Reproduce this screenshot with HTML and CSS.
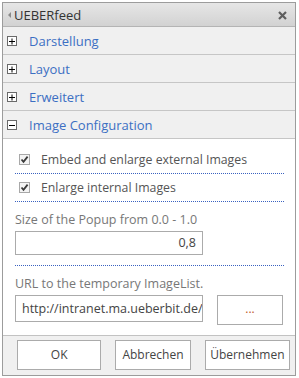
FILE: index.html
```html
<!DOCTYPE html>
<html lang="de">
<head>
    <meta charset="UTF-8">
    <title>UEBERfeed</title>
    <link rel="stylesheet" href="styles.css">
</head>
<body>
    <div class="dialog">
        <div class="titlebar">
            <span class="arrow"></span>
            <span class="title">UEBERfeed</span>
            <svg class="close" width="9" height="9" viewBox="0 0 9 9">
                <path d="M1 1L8 8M8 1L1 8" stroke="#5e5e5e" stroke-width="2.2"/>
            </svg>
        </div>

        <div class="section">
            <svg class="toggle" width="10" height="10" viewBox="0 0 10 10">
                <rect x="0.5" y="0.5" width="9" height="9" fill="#fff" stroke="#6a6a6a"/>
                <path d="M2 5.5H8M5 2.5V8.5" stroke="#000" stroke-width="1"/>
            </svg>
            <span class="section-name">Darstellung</span>
        </div>
        <div class="section">
            <svg class="toggle" width="10" height="10" viewBox="0 0 10 10">
                <rect x="0.5" y="0.5" width="9" height="9" fill="#fff" stroke="#6a6a6a"/>
                <path d="M2 5.5H8M5 2.5V8.5" stroke="#000" stroke-width="1"/>
            </svg>
            <span class="section-name">Layout</span>
        </div>
        <div class="section">
            <svg class="toggle" width="10" height="10" viewBox="0 0 10 10">
                <rect x="0.5" y="0.5" width="9" height="9" fill="#fff" stroke="#6a6a6a"/>
                <path d="M2 5.5H8M5 2.5V8.5" stroke="#000" stroke-width="1"/>
            </svg>
            <span class="section-name">Erweitert</span>
        </div>
        <div class="section">
            <svg class="toggle" width="10" height="10" viewBox="0 0 10 10">
                <rect x="0.5" y="0.5" width="9" height="9" fill="#fff" stroke="#6a6a6a"/>
                <path d="M2 5.5H8" stroke="#000" stroke-width="1"/>
            </svg>
            <span class="section-name">Image Configuration</span>
        </div>

        <div class="content">
            <div class="option">
                <span class="check">
                    <svg width="11" height="11" viewBox="0 0 11 11">
                        <rect x="0.5" y="0.5" width="10" height="10" fill="#f4f4f4" stroke="#a8a8a8"/>
                        <path d="M2.5 5.5L4.5 7.8L8.6 2.6" fill="none" stroke="#3a3a3a" stroke-width="1.8"/>
                    </svg>
                </span>
                <span>Embed and enlarge external Images</span>
            </div>
            <div class="option">
                <span class="check">
                    <svg width="11" height="11" viewBox="0 0 11 11">
                        <rect x="0.5" y="0.5" width="10" height="10" fill="#f4f4f4" stroke="#a8a8a8"/>
                        <path d="M2.5 5.5L4.5 7.8L8.6 2.6" fill="none" stroke="#3a3a3a" stroke-width="1.8"/>
                    </svg>
                </span>
                <span>Enlarge internal Images</span>
            </div>

            <div class="field">
                <div class="label">Size of the Popup from 0.0 - 1.0</div>
                <div class="input number">0,8</div>
            </div>

            <div class="field last">
                <div class="label">URL to the temporary ImageList.</div>
                <div class="url-row">
                    <div class="input url">http://intranet.ma.ueberbit.de/</div>
                    <div class="browse">...</div>
                </div>
            </div>
        </div>

        <div class="footer">
            <div class="btn ok">OK</div>
            <div class="btn cancel">Abbrechen</div>
            <div class="btn apply">Übernehmen</div>
        </div>
    </div>
</body>
</html>
```

FILE: styles.css
```css
body {
    margin: 0;
    font-family: "Open Sans", "Noto Sans", sans-serif;
    font-size: 12px;
    color: #444;
    background: #fff;
}

.dialog {
    margin: 2px 0 0 2px;
    width: 294px;
    box-sizing: border-box;
    border: 1px solid #9c9c9c;
    background: #fff;
}

.titlebar {
    height: 23px;
    display: flex;
    align-items: center;
    padding: 0 8px 0 5px;
    border-bottom: 1px solid #b4b4b4;
    background: linear-gradient(#e6e6e6, #d2d2d2);
}
.arrow {
    width: 0;
    height: 0;
    border-top: 3px solid transparent;
    border-bottom: 3px solid transparent;
    border-right: 3px solid #8a8a8a;
    margin-right: 3px;
}
.title {
    font-size: 13px;
    color: #333;
    flex: 1;
}
.close {
    margin-top: 1px;
}

.section {
    height: 27px;
    display: flex;
    align-items: center;
    padding-left: 4px;
    border-bottom: 1px solid #c6c6c6;
    background: #f0f0f0;
}
.toggle {
    margin-right: 12px;
}
.section-name {
    font-size: 13px;
    color: #3c6fc3;
}

.content {
    padding: 7px 11px 10px 12px;
}
.option {
    height: 27px;
    display: flex;
    align-items: center;
    padding-left: 4px;
    border-bottom: 1px dotted #3a62c0;
    font-size: 12.3px;
    color: #555;
}
.check {
    display: flex;
    margin-right: 11px;
}

.field {
    padding-top: 8px;
    padding-bottom: 10px;
    border-bottom: 1px dotted #3a62c0;
}
.field.last {
    border-bottom: none;
    padding-bottom: 0;
}
.label {
    height: 19px;
    line-height: 19px;
    font-size: 12.5px;
    color: #777;
    margin-bottom: 2px;
}
.input {
    width: 188px;
    box-sizing: border-box;
    border: 1px solid #ababab;
    padding: 0 6px;
    font-size: 12.5px;
    color: #444;
}
.number {
    height: 24px;
    line-height: 22px;
    text-align: right;
}
.url-row {
    display: flex;
    align-items: flex-start;
    gap: 14px;
}
.url {
    height: 27px;
    line-height: 25px;
    white-space: nowrap;
    overflow: hidden;
}
.browse {
    width: 66px;
    height: 30px;
    box-sizing: border-box;
    border: 1px solid #ababab;
    text-align: center;
    line-height: 26px;
    color: #c05a2a;
    font-size: 12px;
}

.footer {
    display: flex;
    gap: 14px;
    padding: 4px 5px 5px 14px;
    border-top: 1px solid #c2c2c2;
    background: #f0f0f0;
}
.btn {
    height: 30px;
    box-sizing: border-box;
    border: 1px solid #ababab;
    background: #fff;
    text-align: center;
    line-height: 28px;
    font-size: 12px;
    color: #444;
}
.ok { width: 85px; }
.cancel { width: 76px; }
.apply { width: 86px; }
```
